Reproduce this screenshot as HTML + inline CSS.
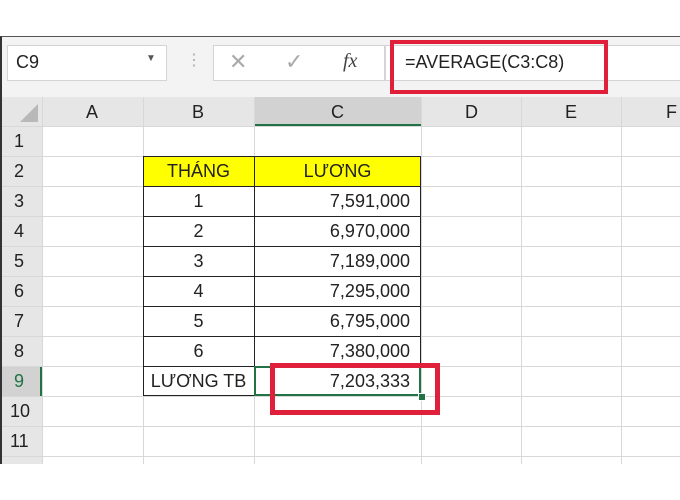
<!DOCTYPE html>
<html><head><style>
body{margin:0;width:680px;height:500px;background:#fff;position:relative;overflow:hidden;font-family:"Liberation Sans",sans-serif;}
.a{position:absolute;}
.t{position:absolute;font-size:18px;color:#222;}
</style></head><body>
<div class="a" style="left:0;top:36px;width:680px;height:428px;background:#fff;border-left:2px solid #333;border-top:1px solid #555;"></div>
<!-- toolbar -->
<div class="a" style="left:2px;top:37px;width:678px;height:60px;background:#f3f3f3;"></div>
<div class="a" style="left:7px;top:45px;width:158px;height:34px;background:#fff;border:1px solid #d4d4d4;"></div>
<div class="t" style="left:16px;top:52px;">C9</div>
<div class="t" style="left:146px;top:53px;font-size:10px;color:#555;">▼</div>
<div class="t" style="left:186px;top:50px;color:#aaa;font-size:16px;">⋮</div>
<div class="a" style="left:213px;top:45px;width:170px;height:34px;background:#fff;border:1px solid #d4d4d4;"></div>
<div class="t" style="left:229px;top:49px;color:#aaa;font-size:22px;">✕</div>
<div class="t" style="left:285px;top:49px;color:#aaa;font-size:22px;">✓</div>
<div class="t" style="left:343px;top:50px;font-family:'Liberation Serif',serif;font-style:italic;color:#444;font-size:20px;">fx</div>
<div class="a" style="left:385px;top:45px;width:295px;height:34px;background:#fff;border:1px solid #d4d4d4;"></div>
<div class="t" style="left:405px;top:52px;">=AVERAGE(C3:C8)</div>
<div class="a" style="left:390px;top:40px;width:210px;height:46px;border:4px solid #e0203a;"></div>
<!-- headers -->
<div class="a" style="left:2px;top:97px;width:678px;height:29px;background:#e6e6e6;border-bottom:1px solid #ccc;"></div>
<div class="a" style="left:2px;top:126px;width:40px;height:338px;background:#e6e6e6;border-right:1px solid #ccc;"></div>
<div class="a" style="left:254px;top:97px;width:167px;height:27px;background:#d2d2d2;border-bottom:2px solid #217346;"></div>
<svg class="a" style="left:18px;top:104px" width="20" height="18"><polygon points="20,0 20,18 2,18" fill="#b8b8b8"/></svg>
<div class="a" style="left:2px;top:366px;width:40px;height:30px;background:#d2d2d2;border-right:2px solid #217346;box-sizing:border-box;"></div>
<div id="g"></div>
<!-- yellow -->
<div class="a" style="left:143px;top:156px;width:278px;height:30px;background:#ffff00;"></div>
<!-- white below -->
<div class="a" style="left:0;top:464px;width:680px;height:36px;background:#fff;"></div>
<script>
var cols=[42,143,254,421,521,621],rows=[126,156,186,216,246,276,306,336,366,396,426,456];
var h='';
cols.forEach(function(x){h+='<div class="a" style="left:'+x+'px;top:97px;width:1px;height:367px;background:#d8d8d8"></div>';});
rows.forEach(function(y,i){h+='<div class="a" style="left:2px;top:'+y+'px;width:678px;height:1px;background:#d8d8d8"></div>';
if(i<11)h+='<div class="t" style="left:'+(i<9?14:10)+'px;top:'+(y+5)+'px;color:'+(i==8?'#217346':'#222')+'">'+(i+1)+'</div>';});
var L=['A','B','C','D','E','F'],cx=[92,198,337,471,571,672];
L.forEach(function(l,i){h+='<div class="t" style="left:'+(cx[i]-6)+'px;top:102px">'+l+'</div>';});
document.getElementById('g').outerHTML=h;
</script>
<!-- table borders -->
<div class="a" style="left:143px;top:156px;width:276px;height:238px;border:1px solid #222;"></div>
<script>
var s='';
for(var i=1;i<8;i++)s+='<div class="a" style="left:143px;top:'+(156+30*i)+'px;width:278px;height:1px;background:#222"></div>';
s+='<div class="a" style="left:254px;top:156px;width:1px;height:240px;background:#222"></div>';
var d=[['THÁNG','LƯƠNG'],['1','7,591,000'],['2','6,970,000'],['3','7,189,000'],['4','7,295,000'],['5','6,795,000'],['6','7,380,000'],['LƯƠNG TB','7,203,333']];
d.forEach(function(r,i){var y=156+30*i+5;
s+='<div class="t" style="left:143px;width:111px;text-align:center;top:'+y+'px">'+r[0]+'</div>';
s+='<div class="t" style="left:254px;width:'+(i==0?167:156)+'px;text-align:'+(i==0?'center':'right')+';top:'+y+'px">'+r[1]+'</div>';});
document.write(s);
</script>
<div class="a" style="left:254px;top:366px;width:167px;height:30px;border:2px solid #217346;box-sizing:border-box;"></div>
<div class="a" style="left:418px;top:393px;width:6px;height:6px;background:#217346;border:1px solid #fff;"></div>
<div class="a" style="left:270px;top:363px;width:160px;height:42px;border:5px solid #e0203a;"></div>
</body></html>
